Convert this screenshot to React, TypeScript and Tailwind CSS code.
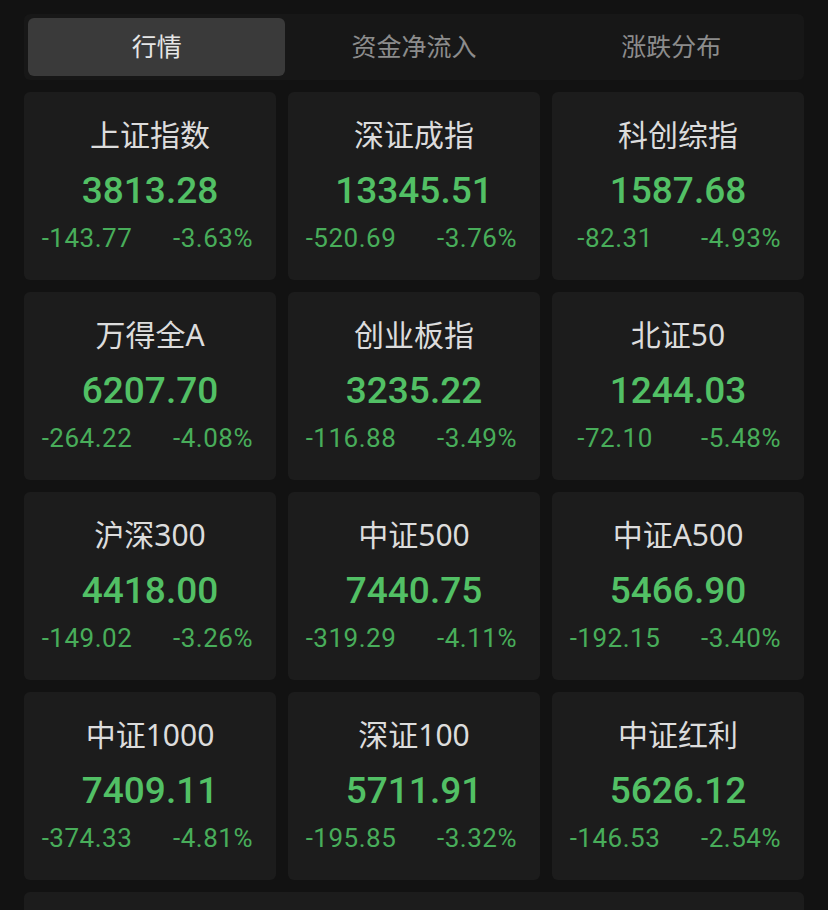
import React from 'react';

type IndexQuote = {
  name: string;
  price: string;
  change: string;
  pct: string;
};

const quotes: IndexQuote[] = [
  { name: '上证指数', price: '3813.28', change: '-143.77', pct: '-3.63%' },
  { name: '深证成指', price: '13345.51', change: '-520.69', pct: '-3.76%' },
  { name: '科创综指', price: '1587.68', change: '-82.31', pct: '-4.93%' },
  { name: '万得全A', price: '6207.70', change: '-264.22', pct: '-4.08%' },
  { name: '创业板指', price: '3235.22', change: '-116.88', pct: '-3.49%' },
  { name: '北证50', price: '1244.03', change: '-72.10', pct: '-5.48%' },
  { name: '沪深300', price: '4418.00', change: '-149.02', pct: '-3.26%' },
  { name: '中证500', price: '7440.75', change: '-319.29', pct: '-4.11%' },
  { name: '中证A500', price: '5466.90', change: '-192.15', pct: '-3.40%' },
  { name: '中证1000', price: '7409.11', change: '-374.33', pct: '-4.81%' },
  { name: '深证100', price: '5711.91', change: '-195.85', pct: '-3.32%' },
  { name: '中证红利', price: '5626.12', change: '-146.53', pct: '-2.54%' },
];

const tabs = ['行情', '资金净流入', '涨跌分布'];

// numbers read narrower/taller than the CJK face, so they get Roboto
const numFont = { fontFamily: 'Roboto, "Noto Sans CJK SC", sans-serif' };

function QuoteCard({ q }: { q: IndexQuote }) {
  return (
    <div className="h-[188px] rounded-md bg-[#1c1c1c] flex flex-col items-center pt-[24px]">
      <div className="text-[30px] leading-[38px] text-[#dcdcdc]">{q.name}</div>
      <div className="mt-[15px] text-[37px] leading-[44px] font-medium text-[#52c065]" style={numFont}>
        {q.price}
      </div>
      <div
        className="mt-[9px] w-full grid grid-cols-2 text-[26px] leading-[32px] tracking-[0.5px] text-[#48ad5a]"
        style={numFont}
      >
        <span className="text-center">{q.change}</span>
        <span className="text-center">{q.pct}</span>
      </div>
    </div>
  );
}

export default function App() {
  const [active, setActive] = React.useState(0);

  return (
    <div
      className="h-[910px] overflow-hidden bg-[#121212] px-[24px] pt-[14px]"
      style={{ fontFamily: '"Noto Sans", "Noto Sans CJK SC", sans-serif' }}
    >
      <div className="h-[66px] rounded-md bg-[#171717] p-[4px] flex">
        {tabs.map((t, i) => (
          <button
            key={t}
            onClick={() => setActive(i)}
            className={
              i === active
                ? 'flex-1 rounded-md bg-[#3a3a3a] text-[25px] text-[#e6e6e6]'
                : 'flex-1 rounded-md text-[25px] text-[#8c8c8c]'
            }
          >
            {t}
          </button>
        ))}
      </div>

      <div className="mt-[12px] grid grid-cols-3 gap-[12px]">
        {quotes.map(q => (
          <QuoteCard key={q.name} q={q} />
        ))}
      </div>

      <div className="mt-[12px] h-[120px] rounded-md bg-[#1c1c1c]" />
    </div>
  );
}
